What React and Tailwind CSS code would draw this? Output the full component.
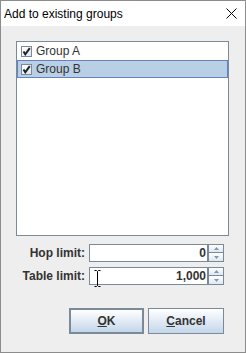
import React from "react";

const groups = [
  { name: "Group A", checked: true, selected: false },
  { name: "Group B", checked: true, selected: true },
];

const CheckBox = () => (
  <div className="w-[11px] h-[11px] border border-[#7a8a99] bg-gradient-to-br from-white to-[#dde8f3] flex items-center justify-center">
    <svg width="9" height="9" viewBox="0 0 9 9">
      <path d="M1.5 4.5 L3.3 7.3 L7.8 1.2" fill="none" stroke="#222" strokeWidth="2" />
    </svg>
  </div>
);

const Spinner = () => (
  <div className="w-[16px] h-[18px] flex flex-col">
    <div className="h-[9px] border border-[#7a8a99] bg-gradient-to-b from-white to-[#dde8f3] flex items-center justify-center">
      <svg width="5" height="3" viewBox="0 0 5 3">
        <path d="M0 3 L2.5 0 L5 3 Z" fill="#8a96a2" />
      </svg>
    </div>
    <div className="h-[9px] border border-t-0 border-[#7a8a99] bg-gradient-to-b from-white to-[#dde8f3] flex items-center justify-center">
      <svg width="5" height="3" viewBox="0 0 5 3">
        <path d="M0 0 L2.5 3 L5 0 Z" fill="#8a96a2" />
      </svg>
    </div>
  </div>
);

const LimitRow = ({ label, value, cursor }) => (
  <div className="flex items-center h-[18px]">
    <div className="w-[69px] text-right font-bold text-[12px] text-[#333]">{label}</div>
    <div className="relative ml-[4px] w-[119px] h-[18px] border border-[#7a8a99] bg-white flex items-center justify-end pr-[1px] font-bold text-[12px] text-[#333]">
      {value}
      {cursor && (
        <svg className="absolute left-[4px] top-[2px]" width="7" height="17" viewBox="0 0 7 17">
          <path d="M0.5 0.5 H2.5 L3.5 1.5 L4.5 0.5 H6.5 M3.5 1.5 V15.5 M0.5 16.5 H2.5 L3.5 15.5 L4.5 16.5 H6.5" fill="none" stroke="#000" strokeWidth="1" />
        </svg>
      )}
    </div>
    <Spinner />
  </div>
);

export default function App() {
  return (
    <div
      className="w-[246px] h-[353px] border border-[#8c8c8c] bg-[#eeeeee] flex flex-col"
      style={{ fontFamily: '"Liberation Sans", Arial, sans-serif' }}
    >
      {/* Title bar */}
      <div className="h-[25px] bg-white flex items-center justify-between pl-[3px] pr-[8px]">
        <span className="text-[12px] text-black">Add to existing groups</span>
        <svg width="11" height="11" viewBox="0 0 11 11">
          <path d="M0.5 0.5 L10.5 10.5 M10.5 0.5 L0.5 10.5" stroke="#000" strokeWidth="1" />
        </svg>
      </div>

      {/* Group list */}
      <div className="mt-[15px] ml-[15px] w-[213px] h-[195px] border border-[#7a8a99] bg-white">
        {groups.map((g) => (
          <div
            key={g.name}
            className={`h-[18px] flex items-center pl-[3px] text-[12px] text-[#333] ${
              g.selected ? "bg-[#b8cfe5] border border-[#6382bf]" : "border border-transparent"
            }`}
          >
            <CheckBox />
            <span className="ml-[4px]">{g.name}</span>
          </div>
        ))}
      </div>

      {/* Limits */}
      <div className="mt-[8px] ml-[15px] flex flex-col gap-[5px]">
        <LimitRow label="Hop limit:" value="0" />
        <LimitRow label="Table limit:" value="1,000" cursor />
      </div>

      {/* Buttons */}
      <div className="mt-[23px] ml-[68px] flex gap-[4px]">
        <button className="w-[75px] h-[26px] border-2 border-[#7a8a99] bg-gradient-to-b from-white to-[#c4d6ea] font-bold text-[12px] text-[#333]">
          <span className="underline">O</span>K
        </button>
        <button className="w-[76px] h-[26px] border border-[#7a8a99] bg-gradient-to-b from-white to-[#c4d6ea] font-bold text-[12px] text-[#333]">
          <span className="underline">C</span>ancel
        </button>
      </div>
    </div>
  );
}
